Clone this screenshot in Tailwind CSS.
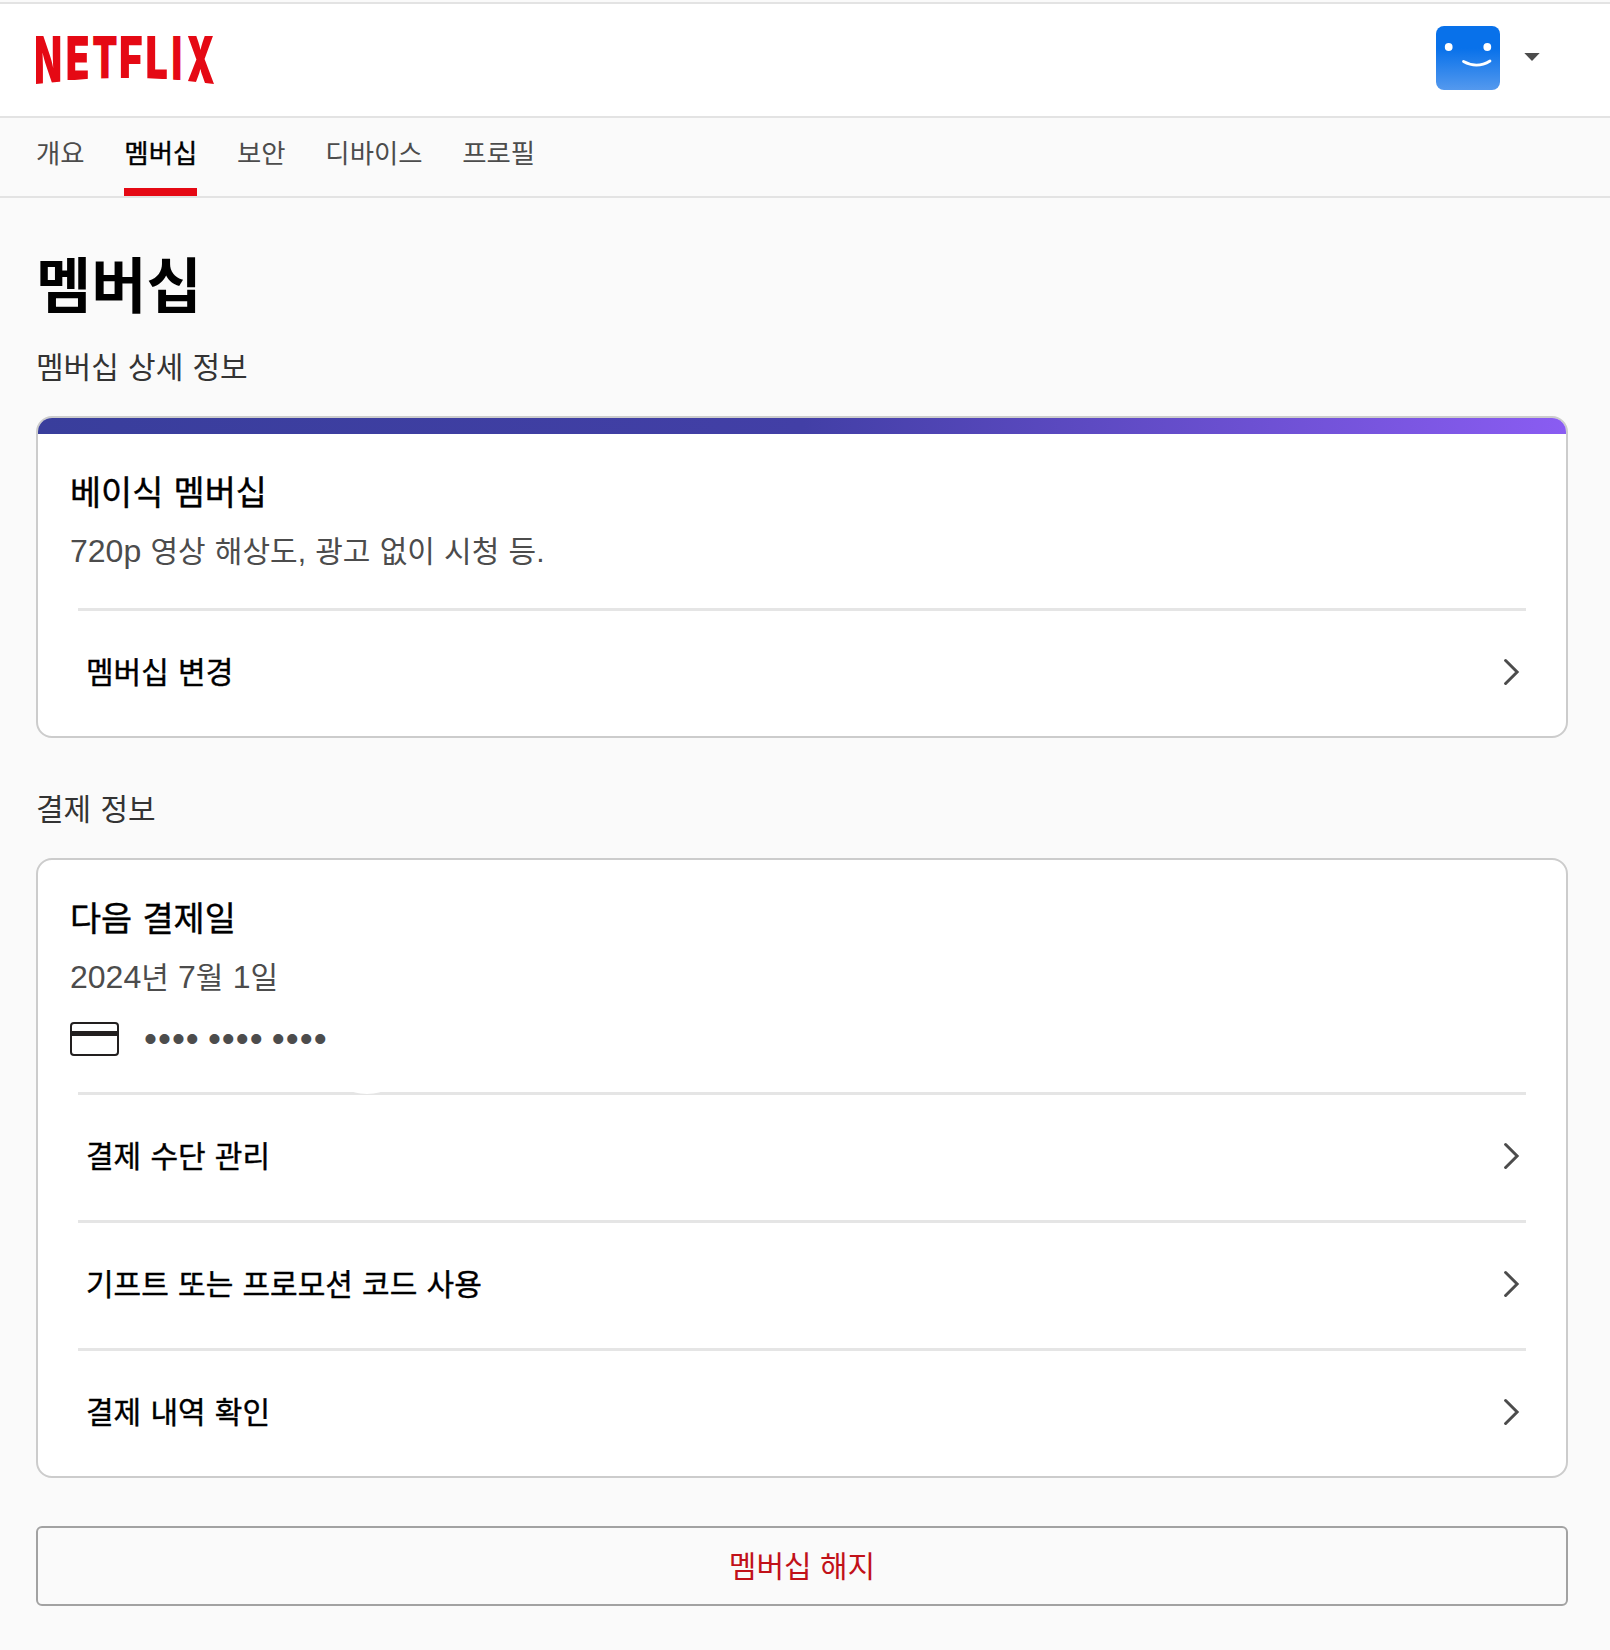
<!DOCTYPE html>
<html lang="ko">
  <head>
    <meta charset="UTF-8" />
    <meta name="viewport" content="width=device-width, initial-scale=1.0" />
    <title>멤버십 - Netflix</title>
    <script src="https://cdn.jsdelivr.net/npm/@tailwindcss/browser@4"></script>
  </head>

  <body
    class="min-h-screen bg-[#fafafa] text-black font-['Liberation_Sans','Noto_Sans_CJK_KR',sans-serif]"
  >
    <!-- Header -->
    <header
      class="mt-0.5 flex h-29 items-start justify-between border-y-2 border-[#e3e3e3] bg-white pl-9 pr-[70px]"
    >
      <a href="#" aria-label="Netflix" class="mt-8">
        <svg class="h-12 w-[178px] overflow-visible" viewBox="0 0 178 48">
          <defs>
            <!-- curved baseline of the wordmark -->
            <clipPath id="arc">
              <path
                d="M0 0H178V48L145 44.2L131 43.3L112 42.2H72L53 42.7L33 44.5L26 45.4L0 48Z"
              />
            </clipPath>
          </defs>
          <g
            clip-path="url(#arc)"
            fill="#e50914"
            font-family="Inter"
            font-weight="900"
          >
            <text transform="translate(-2.2 48) scale(0.555 1)" font-size="66">N</text>
            <text transform="translate(29.8 44) scale(0.64 1)" font-size="60.5">E</text>
            <text transform="translate(56.3 42.5) scale(0.63 1)" font-size="58.5">T</text>
            <text transform="translate(83 42) scale(0.7 1)" font-size="58">F</text>
            <text transform="translate(109.4 43) scale(0.67 1)" font-size="59">L</text>
            <text transform="translate(135.6 44) scale(0.6 1)" font-size="60.5">I</text>
            <text transform="translate(150.1 48) scale(0.555 1)" font-size="66">X</text>
          </g>
        </svg>
      </a>

      <button class="mt-[22px] flex items-center gap-6">
        <svg class="size-16" viewBox="0 0 64 64">
          <defs>
            <linearGradient id="avatarFill" x1="0" y1="0" x2="0" y2="1">
              <stop offset="0.35" stop-color="#0871ea" />
              <stop offset="1" stop-color="#5499ee" />
            </linearGradient>
          </defs>
          <rect width="64" height="64" rx="8" fill="url(#avatarFill)" />
          <circle cx="12.7" cy="21" r="3.9" fill="#fff" />
          <circle cx="51.3" cy="21" r="3.9" fill="#fff" />
          <path
            d="M27.5 35.5Q41 43 54 35"
            fill="none"
            stroke="#fff"
            stroke-width="2.8"
            stroke-linecap="round"
          />
        </svg>
        <svg class="-mt-0.5 h-2 w-4" viewBox="0 0 16 8">
          <path d="M0.3 0H15.7L8 8Z" fill="#4c4c4c" />
        </svg>
      </button>
    </header>

    <!-- Tabs -->
    <nav
      class="flex h-20 gap-[39.8px] border-b-2 border-[#e3e3e3] pl-9 text-[26.4px] leading-16 text-[#4c4c4c]"
    >
      <a href="#" class="pt-1">개요</a>
      <a
        href="#"
        class="border-b-8 border-[#e50914] pt-1 text-black [-webkit-text-stroke:0.4px]"
        >멤버십</a
      >
      <a href="#" class="pt-1">보안</a>
      <a href="#" class="pt-1">디바이스</a>
      <a href="#" class="pt-1">프로필</a>
    </nav>

    <main class="pl-9 pr-[42px] pt-[50px] [word-spacing:0.9px]">
      <h1 class="text-[60px] leading-20 font-bold">멤버십</h1>

      <!-- Plan -->
      <h2 class="mt-4 text-[30px] leading-12 text-[#333]">
        멤버십 상세 정보
      </h2>
      <section
        class="mt-6 overflow-hidden rounded-2xl border-2 border-[#ccc] bg-white"
      >
        <div
          class="h-4 bg-linear-to-r from-[#393e9c] via-[#423fa6] via-50% to-[#8a5cf2]"
        ></div>
        <div class="px-8 pt-[35px]">
          <h3
            class="text-[33.8px] leading-12 [-webkit-text-stroke:0.4px]"
          >
            베이식 멤버십
          </h3>
          <p class="mt-[11px] text-[30px] leading-12 text-[#4c4c4c]">
            <span class="text-[32px] leading-none">720p</span> 영상 해상도, 광고
            없이 시청 등.
          </p>
        </div>
        <ul class="mt-8 ml-10 mr-10">
          <li class="border-t-3 border-[#e5e5e5]">
            <a
              href="#"
              class="flex h-[125px] items-center justify-between px-2 pb-[3px] text-[30px] [-webkit-text-stroke:0.4px]"
            >
              멤버십 변경
              <svg
                class="-mr-0.5 h-7 w-4 text-[#4c4c4c]"
                viewBox="0 0 16 28"
                fill="none"
                stroke="currentColor"
                stroke-width="3"
                stroke-linecap="round"
              >
                <path d="M1.6 2.5L13.1 14L1.6 25.5" />
              </svg>
            </a>
          </li>
        </ul>
      </section>

      <!-- Payment -->
      <h2 class="mt-12 text-[30px] leading-12 text-[#333]">결제 정보</h2>
      <section class="mt-6 rounded-2xl border-2 border-[#ccc] bg-white">
        <div class="px-8 pt-[35px]">
          <h3
            class="text-[33.8px] leading-12 [-webkit-text-stroke:0.4px]"
          >
            다음 결제일
          </h3>
          <p class="mt-[11px] text-[30px] leading-12 text-[#4c4c4c]">
            <span class="text-[32px] leading-none">2024</span>년
            <span class="text-[32px] leading-none">7</span>월
            <span class="text-[32px] leading-none">1</span>일
          </p>
          <div class="mt-5 flex h-[34px] items-center gap-[25px]">
            <svg class="h-[34px] w-[49px]" viewBox="0 0 49 34">
              <rect
                x="1"
                y="1"
                width="47"
                height="32"
                rx="3"
                fill="none"
                stroke="#221f1f"
                stroke-width="2"
              />
              <path d="M1 9H48V14H1Z" fill="#221f1f" />
            </svg>
            <span
              class="text-[37px] leading-[34px] tracking-[1px] text-[#4c4c4c] [word-spacing:-3.2px]"
              >•••• •••• ••••</span
            >
          </div>
        </div>
        <ul class="mt-9 ml-10 mr-10">
          <li class="relative border-t-3 border-[#e5e5e5]">
            <span
              class="absolute -top-[11px] left-[272px] h-2.5 w-[34px] rounded-[50%] bg-white"
            ></span>
            <a
              href="#"
              class="flex h-[125px] items-center justify-between px-2 pb-[3px] text-[30px] [-webkit-text-stroke:0.4px]"
            >
              결제 수단 관리
              <svg
                class="-mr-0.5 h-7 w-4 text-[#4c4c4c]"
                viewBox="0 0 16 28"
                fill="none"
                stroke="currentColor"
                stroke-width="3"
                stroke-linecap="round"
              >
                <path d="M1.6 2.5L13.1 14L1.6 25.5" />
              </svg>
            </a>
          </li>
          <li class="border-t-3 border-[#e5e5e5]">
            <a
              href="#"
              class="flex h-[125px] items-center justify-between px-2 pb-[3px] text-[30px] [-webkit-text-stroke:0.4px]"
            >
              기프트 또는 프로모션 코드 사용
              <svg
                class="-mr-0.5 h-7 w-4 text-[#4c4c4c]"
                viewBox="0 0 16 28"
                fill="none"
                stroke="currentColor"
                stroke-width="3"
                stroke-linecap="round"
              >
                <path d="M1.6 2.5L13.1 14L1.6 25.5" />
              </svg>
            </a>
          </li>
          <li class="border-t-3 border-[#e5e5e5]">
            <a
              href="#"
              class="flex h-[125px] items-center justify-between px-2 pb-[3px] text-[30px] [-webkit-text-stroke:0.4px]"
            >
              결제 내역 확인
              <svg
                class="-mr-0.5 h-7 w-4 text-[#4c4c4c]"
                viewBox="0 0 16 28"
                fill="none"
                stroke="currentColor"
                stroke-width="3"
                stroke-linecap="round"
              >
                <path d="M1.6 2.5L13.1 14L1.6 25.5" />
              </svg>
            </a>
          </li>
        </ul>
      </section>

      <button
        class="mt-12 flex h-20 w-full items-center justify-center rounded-md border-2 border-[#a2a2a2] text-[30px] text-[#c11119]"
      >
        멤버십 해지
      </button>
    </main>
  </body>
</html>
